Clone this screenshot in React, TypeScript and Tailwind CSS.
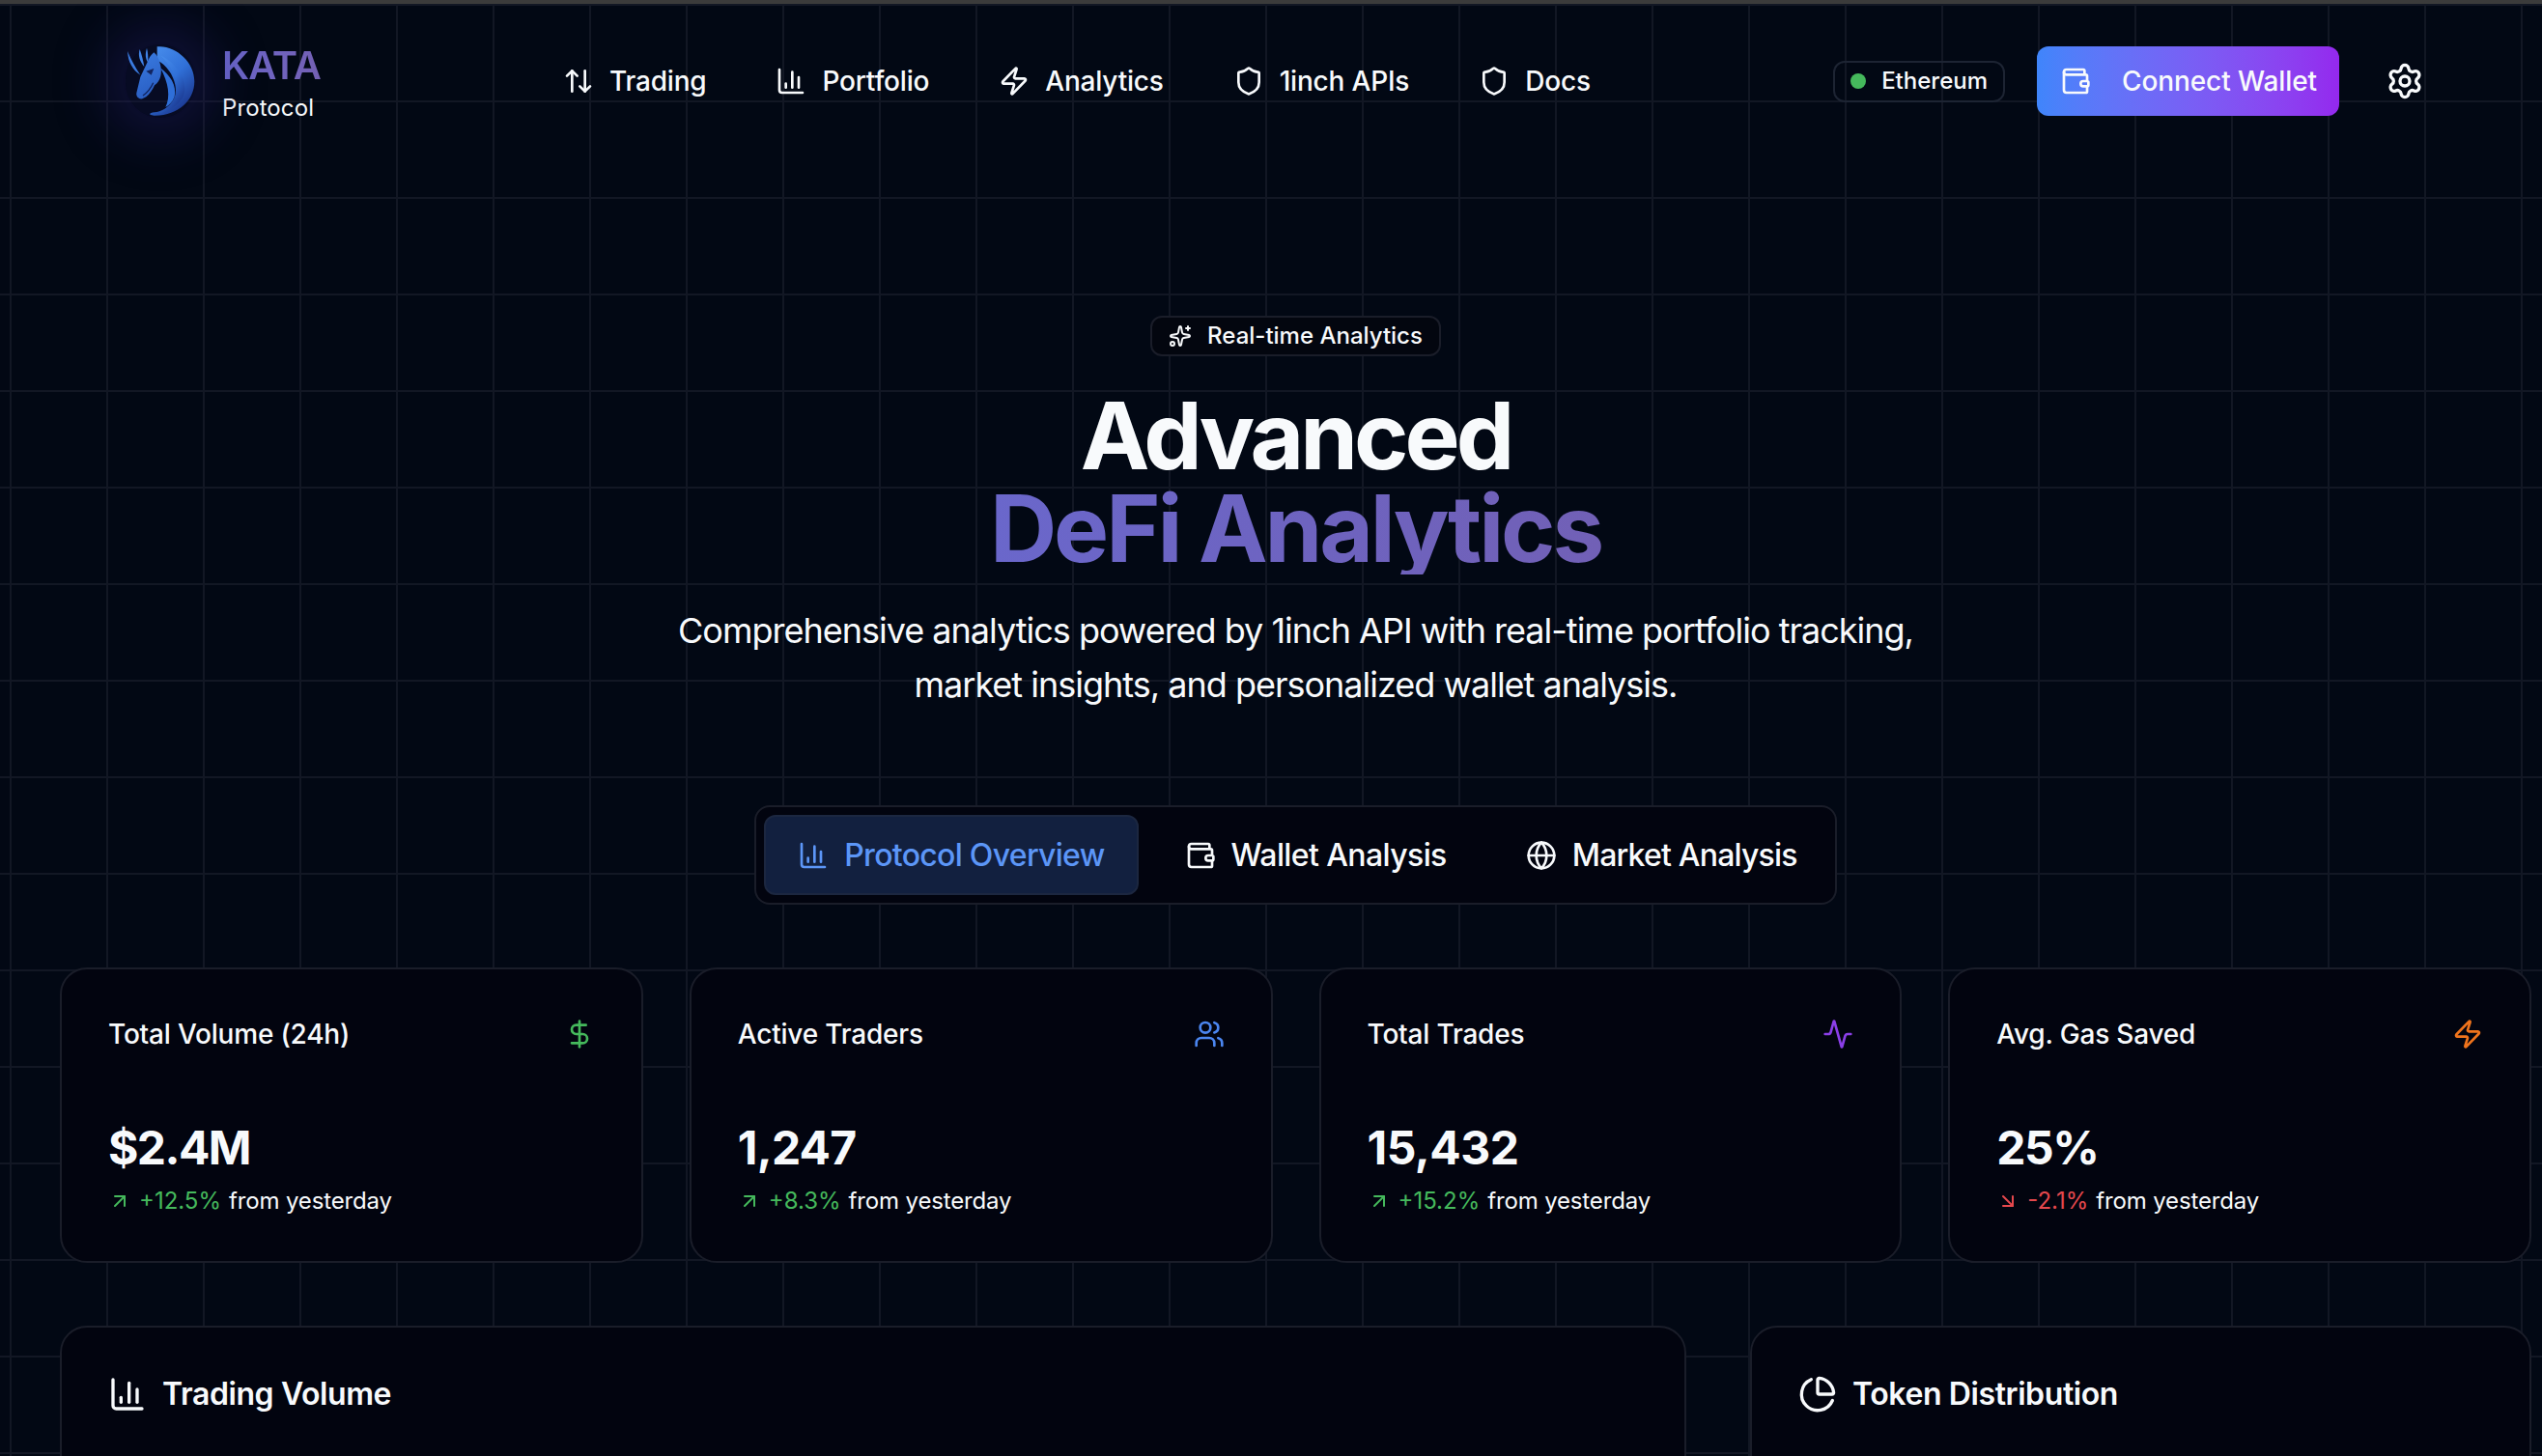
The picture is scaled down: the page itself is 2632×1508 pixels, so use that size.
import { Activity, ArrowDownRight, ArrowUpDown, ArrowUpRight, ChartColumn, ChartPie, DollarSign, Globe, Settings, Shield, Sparkles, Users, Wallet, Zap } from "lucide-react";

function Logo() {
  return (
    <div className="relative w-[72px] h-[76px] rounded-full shadow-[0_0_50px_24px_rgba(38,30,110,0.34)] bg-[#14134a]/30">
      <svg viewBox="62 78 216 226" className="w-[72px] h-[76px]">
        <defs>
          <linearGradient id="lg" x1="0" y1="0" x2="0.6" y2="1">
            <stop offset="0" stopColor="#4a90ee" />
            <stop offset="0.55" stopColor="#3070d8" />
            <stop offset="1" stopColor="#1b3890" />
          </linearGradient>
          <linearGradient id="lh" x1="0" y1="0" x2="0.3" y2="1">
            <stop offset="0" stopColor="#3a7ce2" />
            <stop offset="1" stopColor="#2a5fc4" />
          </linearGradient>
        </defs>
        <path d="M160 84C215 78 276 130 276 192C276 252 224 300 150 298C132 296 134 290 152 288C195 282 226 248 216 202C210 172 190 142 160 126Z" fill="url(#lg)" />
        <path d="M172 112C210 130 246 170 246 214C246 250 210 282 166 290C198 270 224 246 222 206C220 172 198 140 172 112Z" fill="url(#lg)" />
        <path d="M170 150C200 172 222 205 214 240C208 256 198 266 186 272C202 242 196 196 170 150Z" fill="#2f6fd8" />
        <path d="M150 102C140 110 134 120 130 132L108 178L96 228C94 240 104 248 114 246L126 240C136 232 146 218 152 204C172 190 176 165 170 140C166 122 160 110 150 102Z" fill="url(#lh)" />
        <path d="M68 98C70 132 84 156 108 172C92 148 80 126 68 98Z" fill="#3a7be0" />
        <path d="M106 92C100 112 106 130 120 146C116 124 112 108 106 92Z" fill="#3f82e6" />
        <path d="M128 88C122 108 124 122 132 134C132 116 132 102 128 88Z" fill="#3f82e6" />
        <path d="M126 160L150 152L142 172Z" fill="#12245f" />
        <path d="M116 236C130 226 140 214 148 196" stroke="#12245f" strokeWidth="4" fill="none" />
      </svg>
    </div>
  );
}

const navItems = [
  { icon: ArrowUpDown, label: "Trading" },
  { icon: ChartColumn, label: "Portfolio" },
  { icon: Zap, label: "Analytics" },
  { icon: Shield, label: "1inch APIs" },
  { icon: Shield, label: "Docs" },
];

const stats = [
  { title: "Total Volume (24h)", value: "$2.4M", track: "tracking-[-1.6px]", change: "+12.5%", up: true, icon: DollarSign, color: "text-[#45b95c]" },
  { title: "Active Traders", value: "1,247", track: "tracking-[-0.8px]", change: "+8.3%", up: true, icon: Users, color: "text-[#4b86f0]" },
  { title: "Total Trades", value: "15,432", track: "tracking-[-0.5px]", change: "+15.2%", up: true, icon: Activity, color: "text-[#8b3fe8]" },
  { title: "Avg. Gas Saved", value: "25%", track: "tracking-[-1.5px]", change: "-2.1%", up: false, icon: Zap, color: "text-[#f0741c]" },
];

export default function App() {
  return (
    <div className="h-[1508px] overflow-hidden bg-[#020814] text-[#f8fafc] [font-family:Inter,sans-serif] border-t-4 border-[#3b3b3b] bg-[linear-gradient(to_right,#121724_2px,transparent_2px),linear-gradient(to_bottom,#121724_2px,transparent_2px)] bg-[size:100px_100px] bg-[position:10px_0px]">
      <header className="h-[160px] flex items-center pl-[130px]">
        <div className="flex items-center w-[453px] gap-[28px]">
          <Logo />
          <div className="pt-[4px]">
            <div className="text-[40px] leading-[48px] font-semibold tracking-[-1px] bg-linear-to-r from-[#6a67cb] to-[#7460b4] bg-clip-text text-transparent w-fit">KATA</div>
            <div className="text-[24px] leading-[32px] mt-[4px] tracking-[0.1px]">Protocol</div>
          </div>
        </div>
        <nav className="flex items-center gap-[72px] tracking-[-0.2px]">
          {navItems.map((n) => (
            <div key={n.label} className="flex items-center gap-[16px] text-[28px] font-medium">
              <n.icon size={32} />
              <span>{n.label}</span>
            </div>
          ))}
        </nav>
        <div className="ml-auto flex items-center mr-[122px]">
          <div className="flex items-center h-[43px] px-[16px] gap-[16px] rounded-[12px] border-2 border-[#1d2433] text-[24px] font-medium">
            <span className="w-[16px] h-[16px] rounded-full bg-[#45b95c]" />
            <span>Ethereum</span>
          </div>
          <button className="ml-[33px] flex items-center h-[72px] w-[313px] pl-[24px] gap-[32px] rounded-[12px] bg-linear-to-r from-[#3f85fb] to-[#9428ee] text-[28px] font-medium tracking-[-0.1px]">
            <Wallet size={32} />
            <span>Connect Wallet</span>
          </button>
          <Settings size={40} className="ml-[48px]" />
        </div>
      </header>

      <main className="pl-[62px] pr-[11px]">
        <section className="pt-[163px] flex flex-col items-center">
          <div className="flex items-center h-[42px] px-[17px] gap-[16px] rounded-[12px] border-2 border-[#1a1d29] bg-[#03060f] text-[24px] font-medium">
            <Sparkles size={24} />
            <span>Real-time Analytics</span>
          </div>
          <h1 className="mt-[34px] text-[96px] leading-[96px] font-bold text-center">
            <div className="tracking-[-4px]">Advanced</div>
            <div className="tracking-[-3.1px] bg-linear-to-r from-[#6a67cb] to-[#7160b6] bg-clip-text text-transparent">DeFi Analytics</div>
          </h1>
          <p className="mt-[30px] text-[36px] leading-[56px] text-center tracking-[-1px]">
            Comprehensive analytics powered by 1inch API with real-time portfolio tracking,
            <br />
            market insights, and personalized wallet analysis.
          </p>
          <div className="mt-[97px] flex items-center h-[103px] px-[8px] gap-[14px] rounded-[16px] border-2 border-[#1a1d29] bg-[#02040f] text-[32px] font-medium tracking-[-0.7px]">
            <div className="flex items-center h-[83px] px-[33px] gap-[16px] rounded-[12px] border-2 border-[#1c2740] bg-[#12203f] text-[#5c96f7]">
              <ChartColumn size={32} />
              <span>Protocol Overview</span>
            </div>
            <div className="flex items-center h-[83px] px-[34px] gap-[16px] tracking-[-0.6px]">
              <Wallet size={32} />
              <span>Wallet Analysis</span>
            </div>
            <div className="flex items-center h-[83px] pl-[34px] pr-[31px] gap-[16px] tracking-[-0.8px]">
              <Globe size={32} />
              <span>Market Analysis</span>
            </div>
          </div>
        </section>

        <section className="mt-[65px] grid grid-cols-4 gap-[48px]">
          {stats.map((s) => (
            <div key={s.title} className="h-[306px] rounded-[28px] border-2 border-[#1a1d29] bg-[#02040f] px-[48px] pt-[47px]">
              <div className="flex items-center justify-between h-[40px] text-[28px] font-medium tracking-[-0.2px]">
                <span>{s.title}</span>
                <s.icon size={32} className={s.color} />
              </div>
              <div className={`mt-[66px] text-[48px] leading-[64px] font-bold ${s.track}`}>{s.value}</div>
              <div className="mt-[7px] flex items-center text-[24px] leading-[32px]">
                {s.up ? <ArrowUpRight size={24} className="text-[#45b95c]" /> : <ArrowDownRight size={24} className="text-[#e5484d]" />}
                <span className={`ml-[8px] ${s.up ? "text-[#45b95c]" : "text-[#e5484d]"}`}>{s.change}</span>
                <span className="ml-[8px] tracking-[-0.15px]">from yesterday</span>
              </div>
            </div>
          ))}
        </section>

        <section className="mt-[65px] grid grid-cols-[1684px_809px] gap-[66px]">
          <div className="h-[500px] rounded-[28px] border-2 border-[#1a1d29] bg-[#02040f] px-[48px] pt-[49px]">
            <div className="flex items-center gap-[16px] h-[40px] text-[32px] font-semibold tracking-[-0.4px]">
              <ChartColumn size={40} />
              <span>Trading Volume</span>
            </div>
          </div>
          <div className="h-[500px] rounded-[28px] border-2 border-[#1a1d29] bg-[#02040f] px-[48px] pt-[49px]">
            <div className="flex items-center gap-[16px] h-[40px] text-[32px] font-semibold tracking-[-0.4px]">
              <ChartPie size={40} />
              <span>Token Distribution</span>
            </div>
          </div>
        </section>
      </main>
    </div>
  );
}
